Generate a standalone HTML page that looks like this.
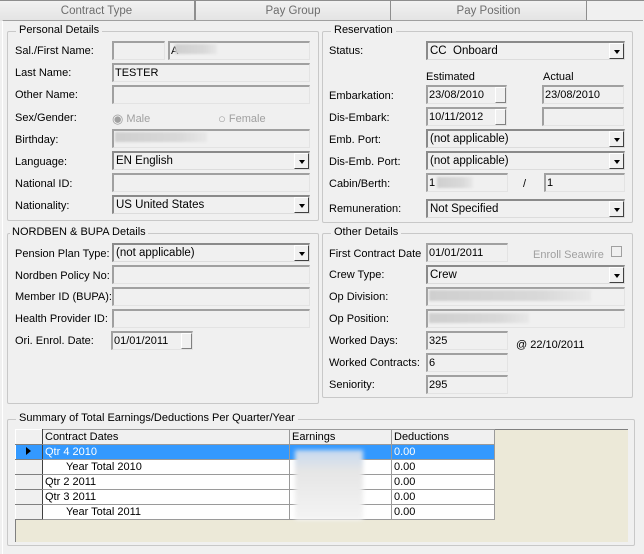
<!DOCTYPE html>
<html><head><meta charset="utf-8"><style>
*{box-sizing:border-box;margin:0;padding:0}
body{width:644px;height:554px;background:#f0f0f0;font-family:"Liberation Sans",Tahoma,sans-serif;font-size:11px;color:#000;position:relative;overflow:hidden}
.a{position:absolute}
.tab{position:absolute;top:0;height:21px;border:1px solid #8e8e8e;border-bottom:none;background:linear-gradient(#f2f2f2,#e3e3e3);color:#6d6d6d;text-align:center;line-height:20px;font-size:11.5px}
.panel{position:absolute;left:2px;top:20px;width:641px;height:534px;border-top:1px solid #a0a0a0;border-left:1px solid #fff}
.g{position:absolute;border:1px solid #c8c8c8;border-radius:2px}
.gt{position:absolute;top:-8px;left:8px;background:#f0f0f0;padding:0 3px;font-size:11px}
.l{position:absolute;font-size:11px;white-space:nowrap;margin-top:1px}
.t{position:absolute;height:19px;background:#f0f0f0;border-top:2px solid #a0a0a0;border-left:2px solid #a0a0a0;border-right:1px solid #e3e3e3;border-bottom:1px solid #e3e3e3;padding-left:1px;line-height:16px;font-size:11px;white-space:nowrap;overflow:hidden}
.c{position:absolute;height:19px;background:#f0f0f0;border-top:2px solid #8a8a8a;border-left:2px solid #8a8a8a;border-right:1px solid #dcdcdc;border-bottom:1px solid #dcdcdc;padding-left:2px;line-height:16px;font-size:11.5px;white-space:nowrap}
.c:after{content:"";position:absolute;right:0;top:0;width:15px;height:16px;background:#f0f0f0;border-right:1px solid #404040;border-bottom:1px solid #404040;border-left:1px solid #fff;border-top:1px solid #fff;box-sizing:border-box}
.c i{position:absolute;right:4px;top:7px;width:0;height:0;border-left:3.5px solid transparent;border-right:3.5px solid transparent;border-top:4px solid #000;z-index:2}
.btn{position:absolute;right:0;top:0;width:11px;height:16px;border-left:1px solid #fff;border-top:1px solid #fff;border-right:1px solid #808080;border-bottom:1px solid #808080}
.blur{position:absolute;background:linear-gradient(90deg,#cfcfcf,#d9d9d9 70%,#e8e8e8);filter:blur(1px)}
table{border-collapse:collapse;position:absolute;left:15px;top:429px;font-size:11px}
td{height:15px;border:1px solid #9a9a9a;padding:0 2px;line-height:13px;background:#fff;white-space:nowrap}
td.h{background:#f0f0f0}
tr.s td{background:#3399ff;color:#fff}
td.ind{background:#f0f0f0;border-top:1px solid #fff;border-left:1px solid #fff;border-right:1px solid #404040;border-bottom:1px solid #808080}
.rb{font-size:13px;vertical-align:-1px}
</style></head><body>
<div class="tab" style="left:-2px;width:197px">Contract Type</div>
<div class="tab" style="left:195px;width:196px">Pay Group</div>
<div class="tab" style="left:390px;width:197px">Pay Position</div>
<div class="a" style="left:587px;top:0;width:57px;height:22px;background:#f0f0f0;border-top:1px solid #8e8e8e"></div>
<div class="panel"></div>

<div class="g" style="left:7px;top:31px;width:312px;height:190px"><div class="gt">Personal Details</div></div>
<div class="l" style="left:15px;top:44px">Sal./First Name:</div>
<div class="t" style="left:112px;top:41px;width:53px"></div>
<div class="t" style="left:168px;top:41px;width:142px">A</div>
<div class="blur" style="left:175px;top:44px;width:42px;height:10px"></div>
<div class="l" style="left:15px;top:66px">Last Name:</div>
<div class="t" style="left:112px;top:63px;width:198px">TESTER</div>
<div class="l" style="left:15px;top:88px">Other Name:</div>
<div class="t" style="left:112px;top:85px;width:198px"></div>
<div class="l" style="left:15px;top:111px">Sex/Gender:</div>
<div class="l" style="left:112px;top:110px;color:#a0a0a0"><span class="rb">◉</span> Male</div>
<div class="l" style="left:218px;top:110px;color:#a0a0a0"><span class="rb">○</span> Female</div>
<div class="l" style="left:15px;top:133px">Birthday:</div>
<div class="t" style="left:112px;top:129px;width:198px"></div>
<div class="blur" style="left:115px;top:132px;width:92px;height:10px"></div>
<div class="l" style="left:15px;top:155px">Language:</div>
<div class="c" style="left:112px;top:151px;width:198px">EN English<i></i></div>
<div class="l" style="left:15px;top:177px">National ID:</div>
<div class="t" style="left:112px;top:173px;width:198px"></div>
<div class="l" style="left:15px;top:199px">Nationality:</div>
<div class="c" style="left:112px;top:195px;width:198px">US United States<i></i></div>

<div class="g" style="left:322px;top:31px;width:311px;height:192px"><div class="gt">Reservation</div></div>
<div class="l" style="left:329px;top:44px">Status:</div>
<div class="c" style="left:426px;top:41px;width:199px">CC&nbsp; Onboard<i></i></div>
<div class="l" style="left:426px;top:70px">Estimated</div>
<div class="l" style="left:543px;top:70px">Actual</div>
<div class="l" style="left:329px;top:89px">Embarkation:</div>
<div class="t" style="left:426px;top:85px;width:81px">23/08/2010<div class="btn"></div></div>
<div class="t" style="left:542px;top:85px;width:82px">23/08/2010</div>
<div class="l" style="left:329px;top:111px">Dis-Embark:</div>
<div class="t" style="left:426px;top:107px;width:81px">10/11/2012<div class="btn"></div></div>
<div class="t" style="left:542px;top:107px;width:82px"></div>
<div class="l" style="left:329px;top:133px">Emb. Port:</div>
<div class="c" style="left:426px;top:129px;width:199px">(not applicable)<i></i></div>
<div class="l" style="left:329px;top:155px">Dis-Emb. Port:</div>
<div class="c" style="left:426px;top:151px;width:199px">(not applicable)<i></i></div>
<div class="l" style="left:329px;top:177px">Cabin/Berth:</div>
<div class="t" style="left:426px;top:173px;width:82px">1</div>
<div class="blur" style="left:437px;top:177px;width:36px;height:11px"></div>
<div class="l" style="left:523px;top:177px">/</div>
<div class="t" style="left:544px;top:173px;width:81px">1</div>
<div class="l" style="left:329px;top:202px">Remuneration:</div>
<div class="c" style="left:426px;top:199px;width:199px">Not Specified<i></i></div>

<div class="g" style="left:7px;top:233px;width:312px;height:171px"><div class="gt" style="left:2px;padding:0 2px">NORDBEN &amp; BUPA Details</div></div>
<div class="l" style="left:15px;top:247px">Pension Plan Type:</div>
<div class="c" style="left:112px;top:243px;width:198px">(not applicable)<i></i></div>
<div class="l" style="left:15px;top:269px">Nordben Policy No:</div>
<div class="t" style="left:112px;top:265px;width:198px"></div>
<div class="l" style="left:15px;top:290px">Member ID (BUPA):</div>
<div class="t" style="left:112px;top:287px;width:198px"></div>
<div class="l" style="left:15px;top:312px">Health Provider ID:</div>
<div class="t" style="left:112px;top:309px;width:198px"></div>
<div class="l" style="left:15px;top:334px">Ori. Enrol. Date:</div>
<div class="t" style="left:111px;top:331px;width:82px">01/01/2011<div class="btn"></div></div>

<div class="g" style="left:322px;top:233px;width:311px;height:165px"><div class="gt">Other Details</div></div>
<div class="l" style="left:329px;top:247px">First Contract Date</div>
<div class="t" style="left:426px;top:243px;width:82px">01/01/2011</div>
<div class="l" style="left:533px;top:248px;color:#a0a0a0">Enroll Seawire</div>
<div class="a" style="left:611px;top:246px;width:11px;height:11px;border:1px solid #a0a0a0;background:#f0f0f0"></div>
<div class="l" style="left:329px;top:268px">Crew Type:</div>
<div class="c" style="left:426px;top:265px;width:199px">Crew<i></i></div>
<div class="l" style="left:329px;top:290px">Op Division:</div>
<div class="t" style="left:426px;top:287px;width:199px"></div>
<div class="blur" style="left:429px;top:290px;width:162px;height:11px"></div>
<div class="l" style="left:329px;top:312px">Op Position:</div>
<div class="t" style="left:426px;top:309px;width:199px"></div>
<div class="blur" style="left:429px;top:313px;width:100px;height:10px"></div>
<div class="l" style="left:329px;top:334px">Worked Days:</div>
<div class="t" style="left:426px;top:331px;width:82px">325</div>
<div class="l" style="left:516px;top:338px">@ 22/10/2011</div>
<div class="l" style="left:329px;top:356px">Worked Contracts:</div>
<div class="t" style="left:426px;top:353px;width:82px">6</div>
<div class="l" style="left:329px;top:378px">Seniority:</div>
<div class="t" style="left:426px;top:375px;width:82px">295</div>

<div class="g" style="left:7px;top:419px;width:628px;height:127px"><div class="gt">Summary of Total Earnings/Deductions Per Quarter/Year</div></div>
<div class="a" style="left:15px;top:429px;width:613px;height:113px;background:#ece9d8;border-top:1px solid #808080;border-left:1px solid #808080"></div>
<table>
<tr><td class="ind" style="width:27px"></td><td class="h" style="width:247px">Contract Dates</td><td class="h" style="width:102px">Earnings</td><td class="h" style="width:103px">Deductions</td></tr>
<tr class="s"><td class="ind"><span style="display:inline-block;margin-left:8px;border-top:4px solid transparent;border-bottom:4px solid transparent;border-left:5px solid #000"></span></td><td>Qtr 4 2010</td><td></td><td>0.00</td></tr>
<tr><td class="ind"></td><td style="padding-left:23px">Year Total 2010</td><td></td><td>0.00</td></tr>
<tr><td class="ind"></td><td>Qtr 2 2011</td><td></td><td>0.00</td></tr>
<tr><td class="ind"></td><td>Qtr 3 2011</td><td></td><td>0.00</td></tr>
<tr><td class="ind"></td><td style="padding-left:23px">Year Total 2011</td><td></td><td>0.00</td></tr>
</table>
<div class="a" style="left:295px;top:450px;width:68px;height:70px;background:linear-gradient(#c6d9f0,#e6e6e6 30%,#f4f4f4);filter:blur(2px)"></div>
</body></html>
